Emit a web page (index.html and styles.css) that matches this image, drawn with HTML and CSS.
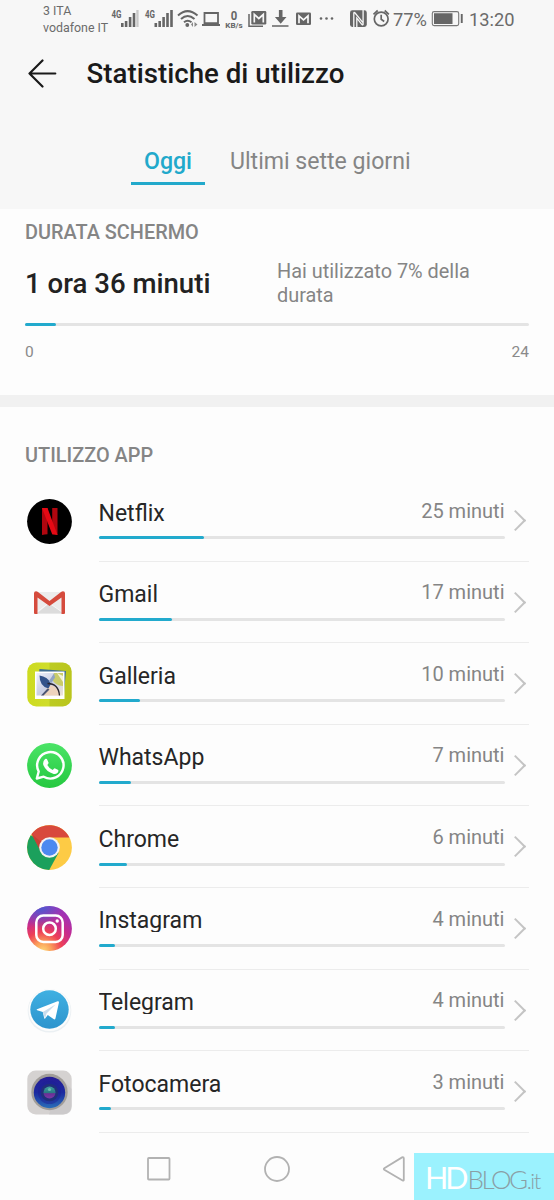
FILE: index.html
```html
<!DOCTYPE html>
<html lang="it">
<head>
	<meta charset="utf-8">
	<title>Statistiche di utilizzo</title>
	<link rel="stylesheet" href="styles.css">
</head>
<body>
<div id="phone">
	<div id="header">
		<div class="status">
			<div class="carrier">3 ITA<br>vodafone IT</div>
			<svg class="st-icons" width="226" height="36" viewBox="110 0 226 36" fill="#666">
				<!-- 4G + 4G -->
				<g font-family="Roboto, sans-serif" font-weight="700" font-size="10">
					<text x="111.500" y="17.500" textLength="10" lengthAdjust="spacingAndGlyphs">4G</text>
					<text x="145" y="17.500" textLength="10" lengthAdjust="spacingAndGlyphs">4G</text>
				</g>
				<path d="M121 23h2.600v4H121zM124.800 21h2.600v6h-2.600zM128.800 17h2.600v10h-2.600zM132.700 13h2.600v14h-2.600z"/>
				<path fill="#c8c8c8" d="M136.300 10h2.300v17h-2.300z"/>
				<path d="M154.500 23h2.600v4h-2.600zM158.400 21h2.600v6h-2.600zM162.300 17h2.600v10h-2.600zM166.200 13h2.600v14h-2.600zM170.200 10h2.600v17h-2.600z"/>
				<!-- wifi -->
				<g fill="none" stroke="#666" stroke-width="2">
					<path d="M178 15.500q9.500-8.800 19.500 0M181 19q6.600-6 13.500 0M184 22.200q3.600-3 7.500 0"/>
				</g>
				<circle cx="187.300" cy="25" r="1.900"/>
				<path fill="#888" d="M193 22v5l-2-2.500zM194.500 22v5l3-2.500z"/>
				<!-- laptop -->
				<path fill="none" stroke="#666" stroke-width="1.800" d="M204.500 13h13.500v10.200h-13.500z"/>
				<path d="M202 24h18v2h-18z"/>
				<g font-family="Roboto, sans-serif" font-weight="700" text-anchor="middle">
					<text x="234" y="19.500" font-size="13" textLength="6.500" lengthAdjust="spacingAndGlyphs">0</text>
					<text x="234" y="27.500" font-size="7.500" textLength="17.500" lengthAdjust="spacingAndGlyphs">KB/s</text>
				</g>
				<!-- mail stack -->
				<path fill="none" stroke="#666" stroke-width="1.500" d="M249 14v12.300h14"/>
				<rect x="251.300" y="11" width="15" height="13.500" rx="1.300"/>
				<path fill="none" stroke="#f7f7f7" stroke-width="1.700" d="M254.300 22.500v-8l4.500 4 4.500-4v8"/>
				<!-- download -->
				<path d="M278.900 10h3.600v7h4l-5.800 6.800-5.800-6.800h4zM272 25.300h16.500v1.400H272z"/>
				<!-- mail -->
				<rect x="296" y="12.500" width="15" height="12.500" rx="1.300"/>
				<path fill="none" stroke="#f7f7f7" stroke-width="1.700" d="M299 23.300v-7.500l4.500 4 4.500-4v7.500"/>
				<circle cx="321" cy="18.500" r="1.300"/><circle cx="326.500" cy="18.500" r="1.300"/><circle cx="332" cy="18.500" r="1.300"/>
			</svg>
			<svg class="st-nfc" width="44" height="36" viewBox="348 0 44 36" fill="#666">
				<!-- nfc -->
				<rect x="350" y="10.300" width="16.800" height="16.600" rx="2.400"/>
				<path fill="none" stroke="#f7f7f7" stroke-width="1.300" d="M353.800 27V13.500q0-2 1.300-.5l8 9.800V10M363.100 10.300v13.500q0 2-1.300.5l-5-6.300v9"/>
				<!-- alarm -->
				<g fill="none" stroke="#666" stroke-width="1.700">
					<circle cx="381.200" cy="19" r="6.900"/>
					<path d="M381.200 14.800v4.500l3 2.200M373.500 14.300l4.200-3.800M388.900 14.300l-4.200-3.800"/>
				</g>
			</svg>
			<span class="percent">77%</span>
			<svg class="st-battery" width="32" height="36" viewBox="431 0 32 36">
				<rect x="432.300" y="11.600" width="26.400" height="14" rx="1.800" fill="none" stroke="#777" stroke-width="1.100"/>
				<path fill="#666" d="M434 13.300h18.500v10.600H434zM460.800 14h1.900v9h-1.900z"/>
			</svg>
			<span class="clock">13:20</span>
		</div>
		<div class="title">
			<svg width="30" height="30" viewBox="0 0 30 30" fill="none" stroke="#1a1a1a" stroke-width="2.200" stroke-linecap="round" stroke-linejoin="round">
				<path d="M28.300 14.500H2.500M15.500 1.500l-13 13 13 13"/>
			</svg>
			<h1>Statistiche di utilizzo</h1>
		</div>
		<div class="tabs">
			<a class="tab active">Oggi</a>
			<a class="tab">Ultimi sette giorni</a>
		</div>
	</div>

	<div id="screen-time">
		<h2>DURATA SCHERMO</h2>
		<div class="total">
			<strong>1 ora 36 minuti</strong>
			<p>Hai utilizzato 7% della durata</p>
		</div>
		<div class="bar"><i style="width:6.1%"></i></div>
		<div class="scale"><span>0</span><span>24</span></div>
	</div>

	<div id="apps">
		<h2>UTILIZZO APP</h2>
		<ul>
			<li>
				<svg class="icon" viewBox="0 0 45 45">
					<circle cx="22.500" cy="22.500" r="22.400"/>
					<path fill="#b1060f" d="M15 9h5.500v26.300q-2.800.2-5.500.7zM25.200 9h5.300v27q-2.600-.5-5.300-.7z"/>
					<path fill="#e50914" d="M15 9h5.500l10 27q-2.700-.5-5.300-.7z"/>
				</svg>
				<div class="app">
					<div class="line"><b>Netflix</b><span>25 minuti</span></div>
					<div class="bar"><i style="width:25.900%"></i></div>
				</div>
			</li>
			<li>
				<svg class="icon" viewBox="0 0 45 45">
					<path fill="#ececec" d="M8 12h29v21.500H8z"/>
					<path fill="#dcdcdc" d="M10 33.500L22.500 23 37 33.500z"/>
					<path fill="none" stroke="#fff" stroke-width=".7" d="M10 32l12-9 13 9"/>
					<path fill="#d54b3d" d="M7 33V13.200q0-2 2-2 1 0 2 .8L22.500 21 34 12q1-.8 2-.8 2 0 2 2V33q0 .9-1 .9h-2.500V17.500L22.500 26 10.500 17.500v16.400H8q-1 0-1-.9z"/>
				</svg>
				<div class="app">
					<div class="line"><b>Gmail</b><span>17 minuti</span></div>
					<div class="bar"><i style="width:18%"></i></div>
				</div>
			</li>
			<li>
				<svg class="icon" viewBox="0 0 45 45">
					<defs>
						<linearGradient id="gal"><stop stop-color="#cddb20"/><stop offset=".48" stop-color="#cfdd2b"/><stop offset=".52" stop-color="#bccb22"/><stop offset="1" stop-color="#bac51d"/></linearGradient>
						<linearGradient id="pic" x2="1" y2="1"><stop stop-color="#eef0fa"/><stop offset=".5" stop-color="#c9cfe4"/><stop offset="1" stop-color="#eee4d9"/></linearGradient>
					</defs>
					<rect x=".3" y=".5" width="44.400" height="44" rx="9" fill="url(#gal)"/>
					<path fill="#3f6d91" d="M12.500 7L39 9l-2 22L10 28z"/>
					<path fill="#fff" d="M8 9.500h29.500V37H8z"/>
					<path fill="url(#pic)" d="M9.500 11H36v22.500H9.500z"/>
					<path fill="#c9cc6a" d="M27 11h9v13q-8 0-11-7z"/>
					<path fill="#f4f4d8" d="M30 11l6 3v6z"/>
					<path fill="#edd3bd" d="M16 33.500L22 23q9 1 10.500 10.500z"/>
					<path fill="#32528a" d="M12.500 13.500q8 1 11.500 8l-2.500 5q-9-2-9-13z"/>
					<path fill="#8fa3c4" d="M22 19l5-7.500 1 4-4 6z"/>
					<path fill="none" stroke="#28242c" stroke-width="1.300" d="M20.500 21.500q11 0 12 12"/>
					<path fill="#4a5573" d="M14 33.500l6.500-7 2 1-6 6z"/>
				</svg>
				<div class="app">
					<div class="line"><b>Galleria</b><span>10 minuti</span></div>
					<div class="bar"><i style="width:10.100%"></i></div>
				</div>
			</li>
			<li>
				<svg class="icon" viewBox="0 0 45 45">
					<defs><linearGradient id="wa" x2="0" y2="1"><stop stop-color="#4be467"/><stop offset="1" stop-color="#25c840"/></linearGradient></defs>
					<circle cx="22.500" cy="22.500" r="22.400" fill="url(#wa)"/>
					<path fill="none" stroke="#fff" stroke-width="2.400" stroke-linejoin="round" d="M9.800 35.500l1.900-7A13.200 13.200 0 1 1 16.700 33.700z"/>
					<path fill="#fff" d="M17.700 15.500q1-.6 2 0l1.800 4q.2.800-1.400 2.600 2 3.800 5.800 5.300 1.600-2 2.200-1.900l3.800 1.900q.5 1.500-.7 3-2 1.700-4.200 1.200-8-2-11.200-9.500-.8-4.200 1.900-6.600z" transform="translate(1.600 1.500) scale(.93)"/>
				</svg>
				<div class="app">
					<div class="line"><b>WhatsApp</b><span>7 minuti</span></div>
					<div class="bar"><i style="width:8%"></i></div>
				</div>
			</li>
			<li>
				<svg class="icon" viewBox="0 0 45 45">
					<circle cx="22.500" cy="22.500" r="22.400" fill="#fdcb45"/>
					<path fill="#1ba05c" d="M3.700 10.300A22.400 22.400 0 0 0 22.200 44.900L31.500 28 22.500 20z"/>
					<path fill="#d8493d" d="M4.500 9.100A22.400 22.400 0 0 1 42.400 12.500H22.500L13.500 26z"/>
					<path fill="#b53a30" d="M4.500 9.100L13.500 26l2-8z" opacity=".5"/>
					<circle cx="22.500" cy="22.500" r="10.300" fill="#f3f3f3"/>
					<circle cx="22.500" cy="22.500" r="8.200" fill="#4c89f0"/>
				</svg>
				<div class="app">
					<div class="line"><b>Chrome</b><span>6 minuti</span></div>
					<div class="bar"><i style="width:7%"></i></div>
				</div>
			</li>
			<li>
				<svg class="icon" viewBox="0 0 45 45">
					<defs>
						<radialGradient id="ig" cx=".35" cy="1" r=".95"><stop stop-color="#ffd776"/><stop offset=".2" stop-color="#fba05a"/><stop offset=".45" stop-color="#ee4056"/><stop offset=".72" stop-color="#c62a8f"/><stop offset="1" stop-color="#a033b5"/></radialGradient>
						<radialGradient id="ig2" cx=".3" cy="0" r=".5"><stop stop-color="#4a5bd2"/><stop offset="1" stop-color="#4a5bd2" stop-opacity="0"/></radialGradient>
					</defs>
					<circle cx="22.500" cy="22.500" r="22.400" fill="url(#ig)"/>
					<circle cx="22.500" cy="22.500" r="22.400" fill="url(#ig2)"/>
					<g fill="none" stroke="#fff" stroke-width="2.500">
						<rect x="9.300" y="9.500" width="26.400" height="26.400" rx="7"/>
						<circle cx="22.500" cy="22.700" r="6.300"/>
					</g>
					<circle cx="30.200" cy="15" r="1.700" fill="#fff"/>
				</svg>
				<div class="app">
					<div class="line"><b>Instagram</b><span>4 minuti</span></div>
					<div class="bar"><i style="width:4%"></i></div>
				</div>
			</li>
			<li>
				<svg class="icon" viewBox="0 0 45 45">
					<defs><linearGradient id="tg" x2="0" y2="1"><stop stop-color="#3fb0e2"/><stop offset="1" stop-color="#2d94cd"/></linearGradient></defs>
					<circle cx="22.500" cy="22.800" r="21.800" fill="#ebf0f3"/>
					<circle cx="22.500" cy="22" r="21" fill="#fcfcfc"/>
					<circle cx="22.500" cy="21.500" r="19.200" fill="url(#tg)"/>
					<path fill="#fff" d="M10 21.300L30.600 13.300q1.600-.5 1.300 1.500L28.500 30.200q-.5 1.800-2 .9L20.800 27l-2.700 3.500q-.8.600-1-.7l-1.300-5.800-5.600-1.700q-1-.5-.2-1z"/>
					<path fill="#c9dcec" d="M15.800 24l12.700-7.500-9 9-1.400 5z"/>
				</svg>
				<div class="app">
					<div class="line"><b>Telegram</b><span>4 minuti</span></div>
					<div class="bar"><i style="width:4%"></i></div>
				</div>
			</li>
			<li>
				<svg class="icon" viewBox="0 0 45 45">
					<defs>
						<linearGradient id="lens" x2="0" y2="1"><stop stop-color="#251b96"/><stop offset=".5" stop-color="#1c2aa0"/><stop offset="1" stop-color="#2a6fb8"/></linearGradient>
						<linearGradient id="eye" x2="0" y2="1"><stop stop-color="#3f9f9d"/><stop offset=".5" stop-color="#2b7b85"/><stop offset=".6" stop-color="#6a2f96"/><stop offset="1" stop-color="#7a3aa5"/></linearGradient>
					</defs>
					<rect x=".3" y=".5" width="44.400" height="44" rx="8.500" fill="#d5d2d1"/>
					<path fill="#c6c5c7" d="M34 8l10.700 11V36q0 8.500-8.500 8.500H22z" opacity=".6"/>
					<circle cx="22.500" cy="22" r="18.200" fill="#a19d99"/>
					<circle cx="22.500" cy="22.500" r="15.700" fill="url(#lens)"/>
					<circle cx="22.500" cy="22.500" r="11.500" fill="#1e1f93" opacity=".5"/>
					<circle cx="22.500" cy="22.500" r="8.800" fill="#20307b"/>
					<circle cx="22.500" cy="22.500" r="6" fill="url(#eye)"/>
					<circle cx="22.500" cy="19.500" r="1.600" fill="#69bbb0"/>
				</svg>
				<div class="app">
					<div class="line"><b>Fotocamera</b><span>3 minuti</span></div>
					<div class="bar"><i style="width:3%"></i></div>
				</div>
			</li>
		</ul>
	</div>

	<div id="nav">
		<svg width="26" height="28" viewBox="0 0 26 28"><rect x="2" y="3" width="21.500" height="21.500" rx=".8"/></svg>
		<svg width="28" height="28" viewBox="0 0 28 28"><circle cx="14" cy="14" r="12"/></svg>
		<svg width="26" height="28" viewBox="0 0 26 28"><path d="M21.800 2.200q1 0 1 1v21.500q0 1.400-1.200.8L3.300 14.700q-1-.7 0-1.400L21 2.400z"/></svg>
	</div>
	<div id="logo"><b>HD</b><span>BLOG</span><em>.it</em></div>
</div>
</body>
</html>
```
FILE: styles.css
```css
*{ margin: 0; padding: 0; box-sizing: border-box; }
body{ background: #fdfdfd; font-family: Roboto, sans-serif; color: #222; }
svg{ display: block; flex: none; }

#phone{ position: relative; width: 554px; height: 1200px; overflow: hidden; }

/* header */
#header{ height: 209px; background: #f7f7f7; }
.status{ display: flex; height: 36px; padding-left: 43px; color: #6b6b6b; white-space: nowrap; }
.carrier{ width: 67px; padding-top: 3px; font-size: 12.400px; line-height: 16.500px; }
.st-nfc{ margin-left: 12px; }
.percent{ width: 38px; margin-left: 1px; font-size: 18.300px; line-height: 39px; }
.clock{ margin-left: 6px; font-size: 18.300px; line-height: 39px; }

.title{ display: flex; align-items: center; height: 76px; padding-left: 27px; }
.title h1{ margin-left: 29.500px; font-size: 27.700px; font-weight: 500; color: #1a1a1a; line-height: 32px; }

.tabs{ display: flex; height: 73px; padding: 32px 0 0 131px; }
.tab{ height: 41px; margin-right: 12px; padding: 0 13px; font-size: 23.100px; line-height: 36px; color: #858585; }
.tab.active{ border-bottom: 3px solid #22a9cb; color: #22a9cb; font-weight: 500; }

h2{ font-size: 19.900px; font-weight: 500; line-height: 24px; color: #858585; }

.bar{ height: 3px; border-radius: 2px; background: #e4e4e4; }
.bar i{ display: block; height: 3px; border-radius: 2px; background: #22aacd; }

/* screen time */
#screen-time{ height: 198px; padding: 11.500px 25px 0; border-bottom: 12px solid #f1f1f1; }
.total{ display: flex; height: 77.500px; padding-top: 15.500px; }
.total strong{ width: 252px; padding-top: 6px; font-size: 27.600px; font-weight: 500; line-height: 36px; }
.total p{ width: 220px; font-size: 19.900px; line-height: 23.500px; color: #858585; }
#screen-time .bar{ margin-top: 1px; }
.scale{ display: flex; justify-content: space-between; margin-top: 15.500px; font-size: 15.500px; line-height: 20px; color: #8a8a8a; }

/* app list */
#apps{ padding: 37px 25px 0; }
#apps ul{ margin-top: 12px; list-style: none; }
#apps li{ display: flex; height: 81.600px; }
.icon{ width: 45px; height: 45px; margin: 18.500px 27px 0 1.500px; }
.app{ position: relative; flex: 1; padding-right: 24.500px; border-bottom: 1px solid #ececec; }
.line{ display: flex; justify-content: space-between; height: 56.300px; }
.line b{ height: 44.500px; padding-top: 17.500px; overflow: hidden; font-size: 23px; font-weight: 400; line-height: 32px; color: #262626; }
.line span{ padding-top: 15.600px; font-size: 20px; line-height: 31px; color: #858585; }
/* arrow on the right */
.app:after{ content: ""; position: absolute; right: 6px; top: 33px; width: 13px; height: 13px; border: solid #c4c4c4; border-width: 2px 2px 0 0; transform: rotate(45deg); }

/* bottom navigation */
#nav{ display: flex; justify-content: space-between; padding: 22px 147px 0 146px; }
#nav svg{ fill: none; stroke: #b2b2b2; stroke-width: 1.800; }

/* watermark */
#logo{ position: absolute; right: 0; bottom: 0; display: flex; align-items: baseline; width: 140px; height: 47px; padding-left: 11px; background: #9bf2fe; font-family: Lato, sans-serif; line-height: 48px; color: #8a9fa6; }
#logo b{ font-size: 30.500px; font-weight: 400; letter-spacing: -3px; color: #fff; }
#logo span{ margin-left: 2px; font-size: 26px; font-weight: 300; letter-spacing: -2.500px; }
#logo em{ margin-left: 1px; font-size: 22px; font-style: normal; font-weight: 300; letter-spacing: -1.500px; }
```
